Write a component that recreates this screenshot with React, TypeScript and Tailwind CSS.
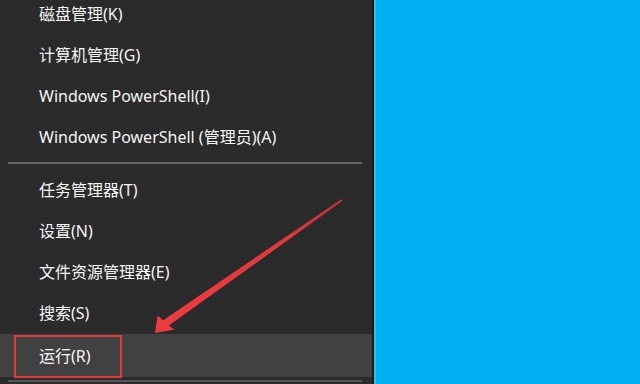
import React from "react";

const groupA = ["磁盘管理(K)", "计算机管理(G)", "Windows PowerShell(I)", "Windows PowerShell (管理员)(A)"];
const groupB = ["任务管理器(T)", "设置(N)", "文件资源管理器(E)", "搜索(S)"];

function Row({ label }: { label: string }) {
  return (
    <div className="h-[41px] shrink-0 flex items-center pl-[39px] text-[16px] text-[#f5f5f5] leading-none">
      {label}
    </div>
  );
}

export default function App() {
  return (
    <div
      className="relative w-[640px] h-[384px] overflow-hidden flex bg-[#00aff0]"
      style={{ fontFamily: '"Noto Sans", "Noto Sans CJK SC", sans-serif' }}
    >
      <div className="w-[372px] h-full bg-[#2b2b2b] flex flex-col shrink-0">
        <div className="-mt-[7px] flex flex-col">
          {groupA.map((l) => (
            <Row key={l} label={l} />
          ))}
        </div>
        <div className="h-[12px] shrink-0 flex items-center px-[8px] pr-[10px]">
          <div className="h-[2px] w-full bg-[#666666]" />
        </div>
        <div className="flex flex-col">
          {groupB.map((l) => (
            <Row key={l} label={l} />
          ))}
        </div>
        <div className="mt-[1px] h-[43px] shrink-0 flex items-center pl-[39px] text-[16px] text-[#f5f5f5] bg-[#414141] leading-none">
          运行(R)
        </div>
        <div className="h-[3px] shrink-0" />
        <div className="mx-[8px] mr-[10px] h-[2px] bg-[#555555]" />
      </div>
      <div className="w-[2px] h-full bg-[#151a1c] shrink-0" />
      <div className="w-[2px] h-full bg-[#3dbbe6] shrink-0" />
      <div className="flex-1 h-full bg-[#00aff0]" />

      {/* red highlight box */}
      <div className="absolute left-[14px] top-[335px] w-[108px] h-[43px] border-2 border-[#e2393f]" />

      {/* red arrow */}
      <svg className="absolute left-0 top-0" width="640" height="384" viewBox="0 0 640 384">
        <defs>
          <linearGradient id="ag" x1="342" y1="200" x2="155" y2="333" gradientUnits="userSpaceOnUse">
            <stop offset="0" stopColor="#b8343a" />
            <stop offset="0.3" stopColor="#e2393f" />
            <stop offset="1" stopColor="#ee3b40" />
          </linearGradient>
        </defs>
        <polygon
          points="341.3,199.2 163.2,320.2 157.5,315.5 155,333 174.5,329.5 168.8,325.6 342.7,200.8"
          fill="url(#ag)"
        />
      </svg>
    </div>
  );
}
